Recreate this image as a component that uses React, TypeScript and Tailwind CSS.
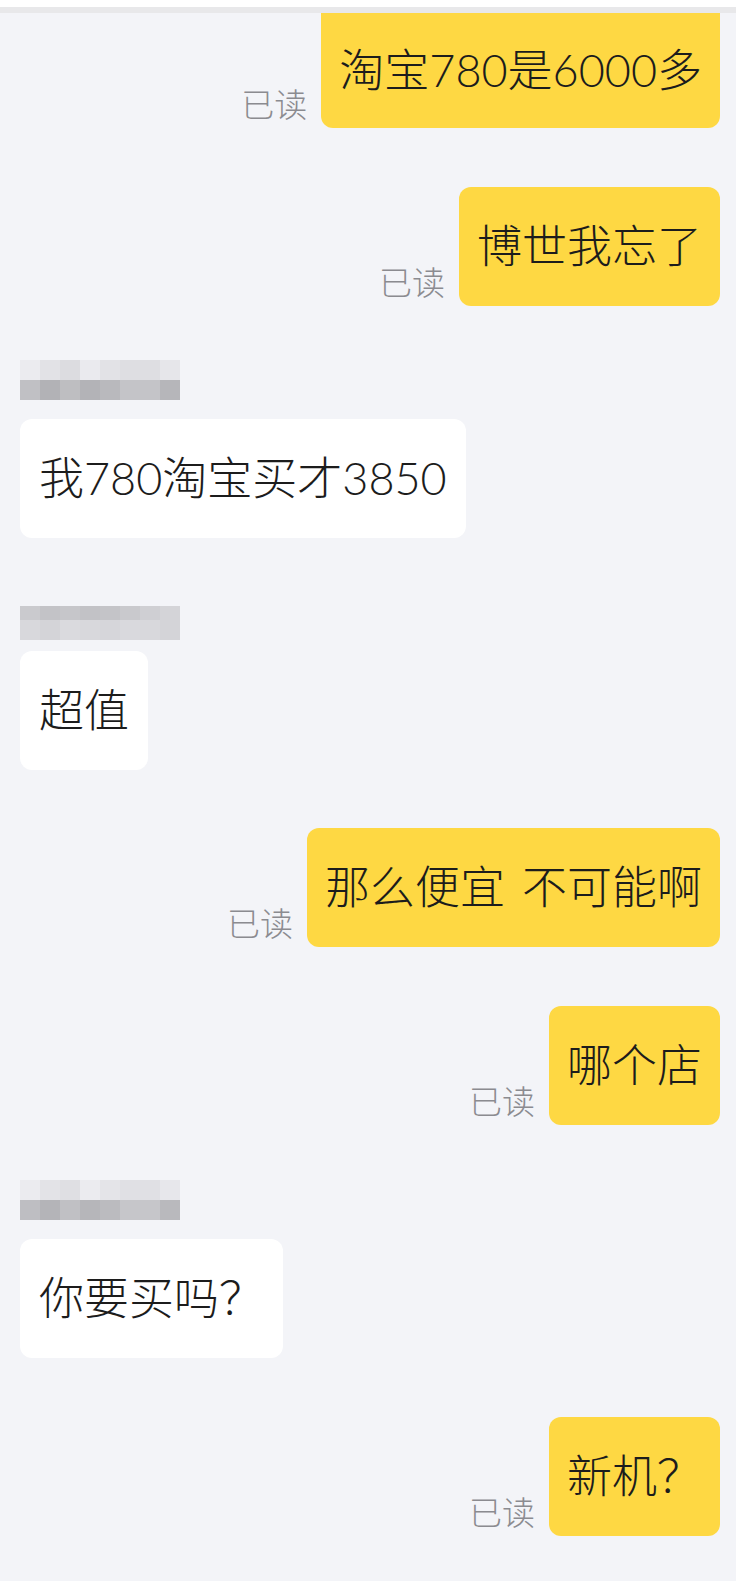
const font = { fontFamily: 'Lato, "Noto Sans CJK SC", "Noto Sans", sans-serif' };

type BlurRow = { h: string; colors: string[] };

function BlurName({ rows, className }: { rows: BlurRow[]; className: string }) {
  return (
    <div className={`flex flex-col ${className}`}>
      {rows.map((r, i) => (
        <div key={i} className="flex">
          {r.colors.map((c, j) => (
            <div key={j} className={`w-[20px] ${r.h}`} style={{ backgroundColor: c }} />
          ))}
        </div>
      ))}
    </div>
  );
}

function Mine({ children, className, first }: { children: React.ReactNode; className: string; first?: boolean }) {
  return (
    <div className={`flex justify-end items-end pr-[16px] ${className}`}>
      <span className="text-[33px] leading-none font-light text-[#8b8b90] mr-[14px] mb-[7px]">已读</span>
      <div
        className={`flex items-center px-[18px] bg-[#fed843] text-[#1c1c1c] text-[45px] leading-none font-light ${
          first ? 'h-[115px] rounded-b-[12px]' : 'h-[119px] rounded-[12px]'
        }`}
      >
        <span className={first ? 'mt-[-1px]' : ''}>{children}</span>
      </div>
    </div>
  );
}

function Theirs({ text, className }: { text: string; className: string }) {
  return (
    <div className={`flex pl-[20px] ${className}`}>
      <div className="flex items-center h-[119px] px-[19px] bg-white rounded-[12px] text-[#1c1c1c] text-[45px] leading-none font-light">
        {text}
      </div>
    </div>
  );
}

const lightA = ['#ebebef', '#e2e2e6', '#dcdce0', '#eaeaee', '#e2e2e6', '#dedee2', '#dedee2', '#e6e6ea'];
const darkA = ['#c0c0c4', '#b2b2b6', '#bebec1', '#b3b3b7', '#b9b9bd', '#c4c4c8', '#c4c4c8', '#b6b6ba'];

export default function App() {
  return (
    <div className="w-[736px] h-[1581px] bg-[#f3f4f8] overflow-hidden" style={font}>
      <div className="h-[7px] bg-white" />
      <div className="h-[6px] bg-[#e8e8ea]" />

      <Mine first className="">淘宝780是6000多</Mine>
      <Mine className="mt-[59px]">博世我忘了</Mine>

      <BlurName
        className="ml-[20px] mt-[54px]"
        rows={[
          { h: 'h-[20px]', colors: lightA },
          { h: 'h-[20px]', colors: darkA },
        ]}
      />
      <Theirs text="我780淘宝买才3850" className="mt-[19px]" />

      <BlurName
        className="ml-[20px] mt-[68px]"
        rows={[
          { h: 'h-[14px]', colors: ['#cacace', '#c3c3c7', '#c6c6ca', '#c2c2c6', '#c4c4c8', '#c9c9cd', '#cfcfd3', '#d4d4d8'] },
          { h: 'h-[20px]', colors: ['#d8d8dc', '#d4d4d8', '#dadade', '#d8d8dc', '#d6d6da', '#d9d9dd', '#d8d8dc', '#d4d4d8'] },
        ]}
      />
      <Theirs text="超值" className="mt-[11px]" />

      <Mine className="mt-[58px]">
        那么便宜<span className="inline-block w-[17px]">&nbsp;</span>不可能啊
      </Mine>
      <Mine className="mt-[59px]">哪个店</Mine>

      <BlurName
        className="ml-[20px] mt-[55px]"
        rows={[
          { h: 'h-[20px]', colors: ['#ebebef', '#e3e3e7', '#dfdfe3', '#ebebef', '#e4e4e8', '#e0e0e4', '#e0e0e4', '#e7e7eb'] },
          { h: 'h-[20px]', colors: ['#bebec2', '#b4b4b8', '#c0c0c4', '#b6b6ba', '#bbbbbf', '#c6c6ca', '#c6c6ca', '#b9b9bd'] },
        ]}
      />
      <Theirs text="你要买吗？" className="mt-[19px]" />

      <Mine className="mt-[59px]">新机？</Mine>
    </div>
  );
}
